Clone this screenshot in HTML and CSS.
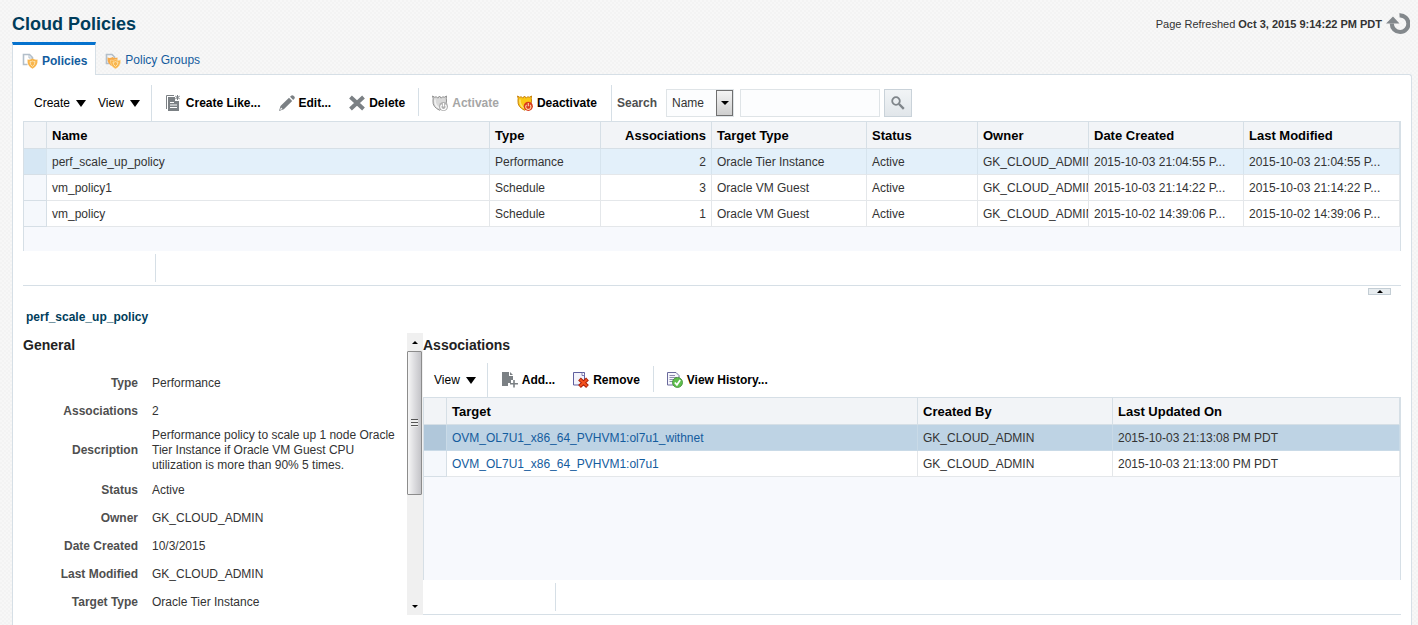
FILE: index.html
```html
<!DOCTYPE html>
<html lang="en">
<head>
<meta charset="utf-8">
<meta name="viewport" content="width=device-width">
<title>Cloud Policies</title>
<link rel="stylesheet" href="styles.css">
</head>

<body>

<header class="page-header">
	<h1>Cloud Policies</h1>
	<div class="refresh">
		<span>Page Refreshed <b>Oct 3, 2015 9:14:22 PM PDT</b></span>
		<button type="button" aria-label="Refresh">
			<svg width="24" height="22" viewBox="0 0 24 22"><path d="M13.500 2.400 A8.300 8.300 0 1 1 5.800 10.500" fill="none" stroke="#83888c" stroke-width="4.200"/><path d="M0 10.500 L7 3.500 L13.500 10.500 Z" fill="#83888c"/></svg>
		</button>
	</div>
</header>

<nav class="tabs">
	<a href="#policies" class="tab active">
		<svg width="16" height="16" viewBox="0 0 16 16"><path d="M5.500 11.500 H1.500 V1.500 H7.500 L10.500 4.500 V6" fill="#fff" stroke="#b3bfca" stroke-width="1.600"/><path d="M7 1.500 V5 H10.500" fill="none" stroke="#b3bfca"/><path d="M5.500 6.500 Q8.500 7 10.500 5.500 Q12.500 7 15.500 6.500 Q16 13 10.500 15.800 Q5 13 5.500 6.500 Z" fill="#f9b54c"/><path d="M8 8.500 Q9.500 9 10.500 8 Q11.500 9 13 8.500 Q13 12 10.500 13.500 Q8 12 8 8.500 Z" fill="none" stroke="#fde3ad"/></svg>
		Policies
	</a>
	<a href="#groups" class="tab">
		<svg width="16" height="16" viewBox="0 0 16 16"><path d="M4.500 10.500 H1.500 V1.500 H7 L9.500 4 V5" fill="none" stroke="#b3bfca" stroke-width="1.600"/><path d="M2.500 4.500 Q5.500 5.500 7.500 4 Q9.500 5.500 12.500 4.500 Q13 11 7.500 13.500 Q2 11 2.500 4.500 Z" fill="#f5a94a"/><path d="M5.500 7 Q8.500 8 10.500 6.500 Q12.500 8 15.500 7 Q16 13 10.500 15.800 Q5 13 5.500 7 Z" fill="#f9b54c" stroke="#fde3ad" stroke-width=".600"/><path d="M8 9 Q9.500 9.500 10.500 8.500 Q11.500 9.500 13 9 Q13 12 10.500 13.500 Q8 12 8 9 Z" fill="none" stroke="#fde3ad"/></svg>
		Policy Groups
	</a>
</nav>

<main class="panel">

	<div class="toolbar">
		<button type="button" class="menu-btn">Create <i class="caret"></i></button>
		<button type="button" class="menu-btn">View <i class="caret"></i></button>
		<span class="sep"></span>
		<button type="button" class="tool-btn">
			<svg width="16" height="16" viewBox="0 0 16 16"><path d="M.500 14 V.500 H8" fill="none" stroke="#7b8084"/><path d="M2 2 H9 V6 H13 V16 H2 Z" fill="#7b8084"/><path d="M4 7.500 H8 M4 10 H11 M4 12.500 H11" stroke="#fff"/><path d="M11.500 0 V5 M9.300 1.200 L13.700 3.800 M13.700 1.200 L9.300 3.800" stroke="#7b8084"/></svg>
			Create Like...
		</button>
		<button type="button" class="tool-btn">
			<svg width="16" height="16" viewBox="0 0 16 16"><path d="M0 16 L1.500 11 L10 2.800 L13.200 6 L4.800 14.300 Z M11 1.800 L12.500 .400 Q13.500 -.200 14.500 .800 L15.300 1.600 Q16.200 2.600 15.500 3.600 L14.200 5 Z" fill="#7b8084"/><path d="M1 15 L2 12.500 L3.500 14 Z" fill="#fff"/></svg>
			Edit...
		</button>
		<button type="button" class="tool-btn">
			<svg width="16" height="16" viewBox="0 0 16 16"><path d="M1.500 2 L14.500 14 M14.500 2 L1.500 14" stroke="#7b8084" stroke-width="4"/></svg>
			Delete
		</button>
		<span class="sep short"></span>
		<button type="button" class="tool-btn" disabled>
			<svg width="16" height="16" viewBox="0 0 16 16"><path d="M.500 1 Q2.500 3 4.500 1.800 L5.800 3.200 L7.500 1 L9.200 3.200 L10.500 1.800 Q12.500 3 14.500 1 Q14 3 14.500 6 Q14.500 12 7.500 15.200 Q.500 12 1 6 Q1.500 3 .500 1 Z" fill="#d9d9d9" stroke="#8f8f8f"/><path d="M3 4.500 Q2.500 10 7 13" fill="none" stroke="#f3f3f3" stroke-width="1.500"/><circle cx="11.500" cy="11.500" r="4.500" fill="#b0b0b0"/><path d="M9.800 9.800 A2.700 2.700 0 1 0 13.200 9.800 M11.500 8 V11.500" fill="none" stroke="#fff" stroke-width="1.300"/></svg>
			Activate
		</button>
		<button type="button" class="tool-btn">
			<svg width="16" height="16" viewBox="0 0 16 16"><path d="M.500 1 Q2.500 3 4.500 1.800 L5.800 3.200 L7.500 1 L9.200 3.200 L10.500 1.800 Q12.500 3 14.500 1 Q14 3 14.500 6 Q14.500 12 7.500 15.200 Q.500 12 1 6 Q1.500 3 .500 1 Z" fill="#fbc814" stroke="#c9820f"/><path d="M3 4.500 Q2.500 10 7 13" fill="none" stroke="#fde56a" stroke-width="1.500"/><circle cx="11.300" cy="11.300" r="4.600" fill="#d93a1c"/><path d="M9.600 9.800 A2.600 2.600 0 1 0 13 9.800 M11.300 8 V11.300" fill="none" stroke="#ffd9a8" stroke-width="1.100"/></svg>
			Deactivate
		</button>
		<span class="sep"></span>
		<form class="search">
			<label for="search_by">Search</label>
			<span class="select-box">
				<select id="search_by">
					<option>Name</option>
					<option>Type</option>
					<option>Status</option>
					<option>Owner</option>
				</select>
				<span class="select-arrow"></span>
			</span>
			<input type="text" id="search_text" aria-label="Search text">
			<button type="button" class="search-btn" aria-label="Search">
				<svg width="14" height="14" viewBox="0 0 14 14"><circle cx="5" cy="5" r="3.800" fill="none" stroke="#7f858a" stroke-width="1.800"/><path d="M8 8 L12.800 12.800" stroke="#7f858a" stroke-width="2.400"/></svg>
			</button>
		</form>
	</div>

	<div class="grid-box policies-box">
		<table class="grid">
			<colgroup>
				<col class="w-handle"><col><col class="w-small"><col class="w-small"><col class="w-date">
				<col class="w-small"><col class="w-small"><col class="w-date"><col class="w-modified">
			</colgroup>
			<thead>
				<tr><th></th><th>Name</th><th>Type</th><th class="num">Associations</th><th>Target Type</th><th>Status</th><th>Owner</th><th>Date Created</th><th>Last Modified</th></tr>
			</thead>
			<tbody>
				<tr class="selected"><td></td><td>perf_scale_up_policy</td><td>Performance</td><td class="num">2</td><td>Oracle Tier Instance</td><td>Active</td><td class="clip">GK_CLOUD_ADMIN</td><td>2015-10-03 21:04:55 P...</td><td>2015-10-03 21:04:55 P...</td></tr>
				<tr><td></td><td>vm_policy1</td><td>Schedule</td><td class="num">3</td><td>Oracle VM Guest</td><td>Active</td><td class="clip">GK_CLOUD_ADMIN</td><td>2015-10-03 21:14:22 P...</td><td>2015-10-03 21:14:22 P...</td></tr>
				<tr><td></td><td>vm_policy</td><td>Schedule</td><td class="num">1</td><td>Oracle VM Guest</td><td>Active</td><td class="clip">GK_CLOUD_ADMIN</td><td>2015-10-02 14:39:06 P...</td><td>2015-10-02 14:39:06 P...</td></tr>
			</tbody>
		</table>
	</div>
	<div class="grid-footer"></div>

	<div class="splitter">
		<button type="button" aria-label="Collapse pane"><i class="arrow-up"></i></button>
	</div>

	<h2 class="detail-title">perf_scale_up_policy</h2>

	<div class="detail">
		<section class="general">
			<h3>General</h3>
			<dl>
				<dt>Type</dt><dd>Performance</dd>
				<dt>Associations</dt><dd>2</dd>
				<dt>Description</dt><dd>Performance policy to scale up 1 node Oracle Tier Instance if Oracle VM Guest CPU utilization is more than 90% 5 times.</dd>
				<dt>Status</dt><dd>Active</dd>
				<dt>Owner</dt><dd>GK_CLOUD_ADMIN</dd>
				<dt>Date Created</dt><dd>10/3/2015</dd>
				<dt>Last Modified</dt><dd>GK_CLOUD_ADMIN</dd>
				<dt>Target Type</dt><dd>Oracle Tier Instance</dd>
			</dl>
		</section>

		<div class="scrollbar">
			<div class="scroll-end"><i class="arrow-up"></i></div>
			<div class="scroll-thumb"><i class="grip"></i></div>
			<div class="scroll-track"></div>
			<div class="scroll-end"><i class="arrow-down"></i></div>
		</div>

		<section class="associations">
			<h3>Associations</h3>
			<div class="toolbar">
				<button type="button" class="menu-btn">View <i class="caret"></i></button>
				<span class="sep"></span>
				<button type="button" class="tool-btn">
					<svg width="16" height="16" viewBox="0 0 16 16"><path d="M0 0 H7 V4 H11 V8 H9 V11 H6 V14 H0 Z" fill="#7b8084"/><path d="M8 0 L11 3 H8 Z" fill="#7b8084"/><path d="M12 8 V15.500 M8 11.800 H16" stroke="#7b8084" stroke-width="1.600"/></svg>
					Add...
				</button>
				<button type="button" class="tool-btn">
					<svg width="16" height="16" viewBox="0 0 16 16"><path d="M.500 .500 H11.500 V13 H.500 Z" fill="#f3f3fb" stroke="#5f5f9f"/><path d="M9 .500 V3.500 H12" fill="#fff" stroke="#5f5f9f" stroke-width=".800"/><path d="M6.500 7 L14.500 14.500 M14.500 7 L6.500 14.500" stroke="#a81d08" stroke-width="4"/><path d="M7 7.500 L14 14 M14 7.500 L7 14" stroke="#f4511e" stroke-width="2.200"/></svg>
					Remove
				</button>
				<span class="sep short"></span>
				<button type="button" class="tool-btn">
					<svg width="16" height="16" viewBox="0 0 16 16"><path d="M.500 .500 H9 L12 3.500 V13 H.500 Z" fill="#f6f6fc" stroke="#6a6a9c"/><path d="M2.500 3.500 H8 M2.500 5.500 H10 M2.500 7.500 H8 M2.500 9.500 H6" stroke="#8d8dac"/><circle cx="10.500" cy="10.500" r="5" fill="#5fbf4d" stroke="#3c8a32" stroke-width=".800"/><path d="M7.800 10.500 L9.900 12.800 L13.200 8" fill="none" stroke="#fff" stroke-width="1.700"/></svg>
					View History...
				</button>
			</div>
			<div class="grid-box assoc-box">
				<table class="grid">
					<colgroup><col class="w-handle"><col><col class="w-created"><col class="w-updated"></colgroup>
					<thead>
						<tr><th></th><th>Target</th><th>Created By</th><th>Last Updated On</th></tr>
					</thead>
					<tbody>
						<tr class="current"><td></td><td><a href="#withnet">OVM_OL7U1_x86_64_PVHVM1:ol7u1_withnet</a></td><td>GK_CLOUD_ADMIN</td><td>2015-10-03 21:13:08 PM PDT</td></tr>
						<tr><td></td><td><a href="#ol7u1">OVM_OL7U1_x86_64_PVHVM1:ol7u1</a></td><td>GK_CLOUD_ADMIN</td><td>2015-10-03 21:13:00 PM PDT</td></tr>
					</tbody>
				</table>
			</div>
			<div class="grid-footer"></div>
		</section>
	</div>

</main>

</body>
</html>
```
FILE: styles.css
```css
* {
	box-sizing: border-box;
}

body {
	display: flex;
	flex-direction: column;
	min-height: 100vh;
	margin: 0;
	padding: 0 6px 0 12px;
	color: #333;
	font: 12px/15px "Liberation Sans", Arial, sans-serif;
	background: #f6f6f6 repeating-conic-gradient(#f3f3f3 0 25%, #f7f7f7 0 50%) 0 0 / 4px 4px;
}

h1, h2, h3, dl, dd {
	margin: 0;
}

button {
	padding: 0;
	border: 0;
	color: #000;
	font: inherit;
	background: none;
}

svg {
	display: block;
	flex: none;
}

a {
	color: #145c9e;
	text-decoration: none;
}

/* header and tabs */

.page-header {
	display: flex;
	justify-content: space-between;
	align-items: center;
	height: 42px;
	padding: 6px 2px 0 0;
}

h1 {
	color: #003d5b;
	font-size: 18px;
	line-height: 22px;
}

.refresh {
	display: flex;
	align-items: center;
	gap: 4px;
	font-size: 11px;
}

.tabs {
	display: flex;
	height: 32px;
}

.tab {
	display: flex;
	align-items: center;
	gap: 4px;
	padding: 5px 9px 0;
}

.tab.active {
	height: 33px;
	padding: 2px 8px 0 9px;
	border: 1px solid #d6dfe6;
	border-top: 3px solid #0572ce;
	border-bottom: 0;
	font-weight: bold;
	background: #fff;
	z-index: 1;
}

.panel {
	flex: 1;
	padding: 10px 10px 0;
	border: 1px solid #d6dfe6;
	border-bottom: 0;
	border-top-right-radius: 3px;
	background: #fff;
}

/* toolbars */

.toolbar {
	display: flex;
	align-items: center;
	height: 36px;
	padding-left: 5px;
}

.menu-btn, .tool-btn {
	display: flex;
	align-items: center;
	height: 24px;
	white-space: nowrap;
}

.menu-btn {
	gap: 6px;
	padding: 0 6px;
}

.tool-btn {
	gap: 4px;
	padding: 0 9px;
	font-weight: bold;
}

.tool-btn:disabled {
	color: #a6a6a6;
}

.caret {
	border: 5px solid transparent;
	border-top: 7px solid #000;
	border-bottom: 0;
}

.sep {
	align-self: stretch;
	width: 1px;
	margin: 0 5px;
	background: #d6dfe6;
}

.sep.short {
	margin: 3px 4px 5px;
}

.search {
	display: flex;
	align-items: center;
	gap: 4px;
}

.search label {
	margin-right: 5px;
	color: #4f4f4f;
	font-weight: bold;
}

.select-box {
	position: relative;
	margin-right: 2px;
}

.search select, .search input {
	height: 28px;
	margin: 0;
	padding: 0 5px;
	border: 1px solid #dfe4e7;
	border-radius: 0;
	color: #333;
	font: inherit;
	background: #fcfdfe;
}

.search select {
	display: block;
	width: 68px;
	appearance: none;
}

.search input {
	width: 140px;
}

.select-arrow {
	position: absolute;
	top: 1px;
	right: 1px;
	display: grid;
	place-items: center;
	width: 17px;
	height: 26px;
	border: 1px solid #707070;
	background: linear-gradient(#f4f4f4, #cfcfcf);
	pointer-events: none;
}

.select-arrow::after {
	content: "";
	border: 4px solid transparent;
	border-top-color: #000;
	border-bottom: 0;
}

.search-btn {
	display: grid;
	place-items: center;
	width: 28px;
	height: 28px;
	border: 1px solid #c9d2d9;
	background: linear-gradient(#f1f4f6, #e1e6ea);
}

/* data grids */

.grid-box {
	border: 1px solid #d6dfe6;
	border-bottom: 0;
	background: #f7f9fd;
}

.policies-box {
	height: 130px;
}

.assoc-box {
	height: 183px;
}

.grid {
	width: 100%;
	border-collapse: separate;
	border-spacing: 0;
	table-layout: fixed;
}

.w-handle { width: 23px; }
.w-small { width: 111px; }
.w-date { width: 155px; }
.w-modified { width: 156px; }
.w-created { width: 195px; }
.w-updated { width: 287px; }

.grid th, .grid td {
	height: 26px;
	padding: 0 5px;
	border-right: 1px solid #e4e7ea;
	border-bottom: 1px solid #e4e7ea;
	overflow: hidden;
	text-align: left;
	white-space: nowrap;
}

.grid th {
	height: 27px;
	border-color: #d6dfe6;
	color: #000;
	font-size: 13px;
	background: #f2f4f7;
}

.grid td {
	padding-top: 2px;
	background: #fff;
}

.grid td:first-child {
	border-color: #d6dfe6;
	background: #f5f8fc;
}

.grid .num {
	text-align: right;
}

.grid .clip {
	padding-right: 0;
}

.grid .selected td {
	border-right-color: #d6e4ee;
	background: #e3f0fa;
}

.grid .selected td:first-child {
	background: #d6e7f4;
}

.grid .current td {
	border-color: #c9dae7;
	background: #bed3e4;
}

.grid .current td:first-child {
	background: #b0c7da;
}

.grid-footer {
	height: 35px;
	padding: 3px 0;
	border-bottom: 1px solid #d6dfe6;
}

.grid-footer::before {
	content: "";
	display: block;
	width: 132px;
	height: 28px;
	border-right: 1px solid #d6dfe6;
}

.splitter {
	display: flex;
	justify-content: flex-end;
	height: 22px;
	padding: 2px 10px 0;
}

.splitter button {
	display: grid;
	place-items: center;
	width: 23px;
	height: 7px;
	border: 1px solid #c3cdd4;
	background: #e8edf0;
}

.arrow-up, .arrow-down {
	border: 3px solid transparent;
}

.arrow-up {
	border-top: 0;
	border-bottom-color: #000;
}

.arrow-down {
	border-top-color: #000;
	border-bottom: 0;
}

/* details of the selected policy */

.detail-title {
	padding: 2px 3px 8px;
	color: #003d5b;
	font-size: 12px;
}

.detail {
	display: flex;
	height: 282px;
}

h3 {
	height: 30px;
	padding-top: 4px;
	color: #222;
	font-size: 14px;
	line-height: 16px;
}

.general {
	flex: none;
	width: 384px;
	overflow: hidden;
}

.general dl {
	display: grid;
	grid-template-columns: 115px 1fr;
	column-gap: 14px;
	padding-top: 6px;
}

.general dt, .general dd {
	display: flex;
	align-items: center;
	min-height: 28px;
	padding: 3px 0;
}

.general dt {
	justify-content: flex-end;
	color: #4f4f4f;
	font-weight: bold;
}

.scrollbar {
	display: flex;
	flex-direction: column;
	flex: none;
	width: 16px;
	background: #f0f0f0;
}

.scroll-end {
	display: grid;
	place-items: center;
	height: 18px;
}

.scroll-thumb {
	display: grid;
	place-items: center;
	height: 144px;
	margin-right: 1px;
	border: 1px solid #8c8c8c;
	border-radius: 1px;
	background: linear-gradient(90deg, #f6f6f6, #dcdcdf 50%, #c4c4c8);
}

.grip {
	width: 7px;
	height: 8px;
	background: repeating-linear-gradient(#555 0 1px, #eee 1px 3px);
}

.scroll-track {
	flex: 1;
}

.associations {
	flex: 1;
	min-width: 0;
}

.associations .toolbar {
	height: 34px;
}
```
